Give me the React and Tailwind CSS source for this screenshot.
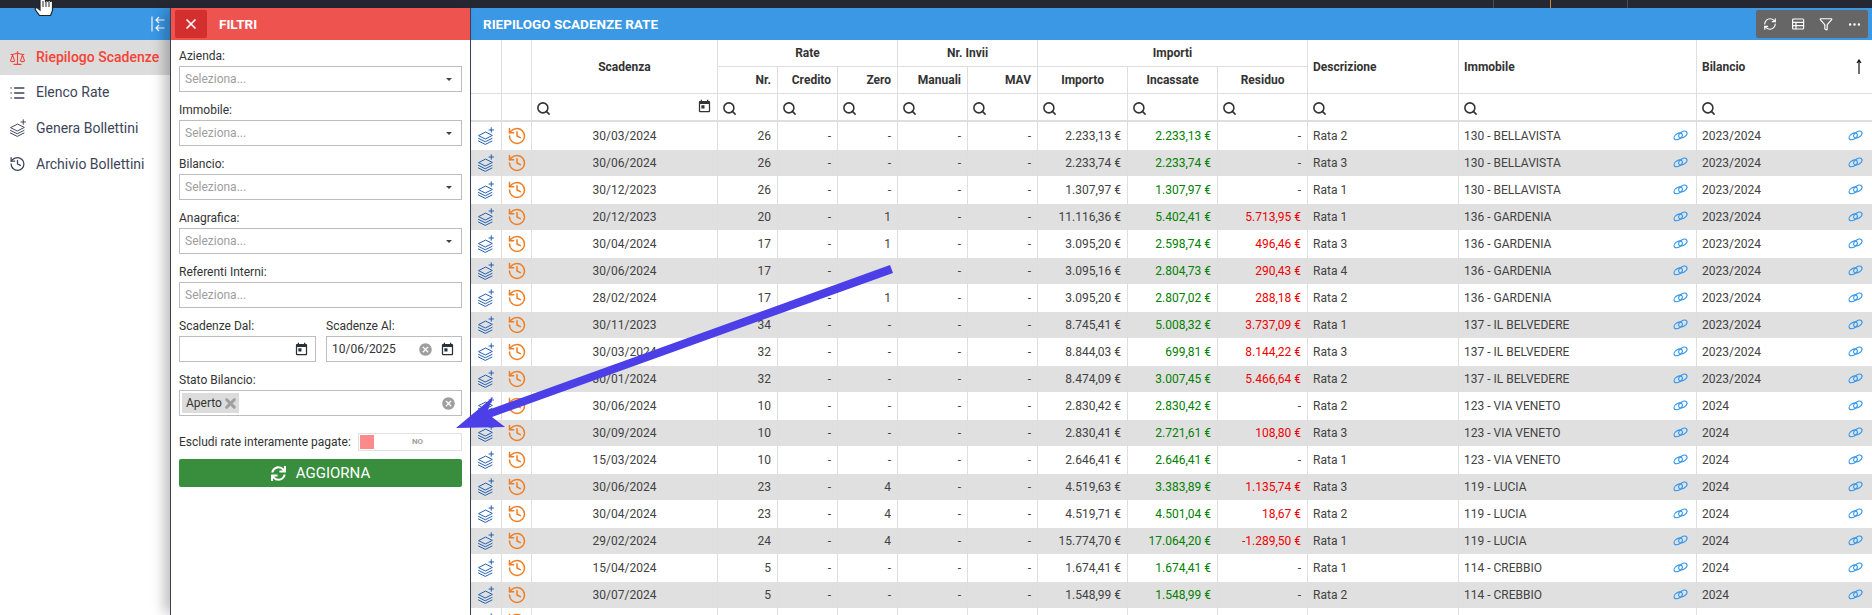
import React from "react";
import { Scale, List, History, Search, X, RefreshCw, Filter, MoreHorizontal } from "lucide-react";
import { MdToday, MdCancel } from "react-icons/md";
import { FaSync } from "react-icons/fa";

const B = "130 - BELLAVISTA", G = "136 - GARDENIA", V = "137 - IL BELVEDERE", T = "123 - VIA VENETO", L = "119 - LUCIA", C = "114 - CREBBIO";
const Y = "2023/2024";
const rows = [
  ["30/03/2024", "26", "-", "2.233,13 €", "2.233,13 €", "-", "Rata 2", B, Y],
  ["30/06/2024", "26", "-", "2.233,74 €", "2.233,74 €", "-", "Rata 3", B, Y],
  ["30/12/2023", "26", "-", "1.307,97 €", "1.307,97 €", "-", "Rata 1", B, Y],
  ["20/12/2023", "20", "1", "11.116,36 €", "5.402,41 €", "5.713,95 €", "Rata 1", G, Y],
  ["30/04/2024", "17", "1", "3.095,20 €", "2.598,74 €", "496,46 €", "Rata 3", G, Y],
  ["30/06/2024", "17", "-", "3.095,16 €", "2.804,73 €", "290,43 €", "Rata 4", G, Y],
  ["28/02/2024", "17", "1", "3.095,20 €", "2.807,02 €", "288,18 €", "Rata 2", G, Y],
  ["30/11/2023", "34", "-", "8.745,41 €", "5.008,32 €", "3.737,09 €", "Rata 1", V, Y],
  ["30/03/2024", "32", "-", "8.844,03 €", "699,81 €", "8.144,22 €", "Rata 3", V, Y],
  ["30/01/2024", "32", "-", "8.474,09 €", "3.007,45 €", "5.466,64 €", "Rata 2", V, Y],
  ["30/06/2024", "10", "-", "2.830,42 €", "2.830,42 €", "-", "Rata 2", T, "2024"],
  ["30/09/2024", "10", "-", "2.830,41 €", "2.721,61 €", "108,80 €", "Rata 3", T, "2024"],
  ["15/03/2024", "10", "-", "2.646,41 €", "2.646,41 €", "-", "Rata 1", T, "2024"],
  ["30/06/2024", "23", "4", "4.519,63 €", "3.383,89 €", "1.135,74 €", "Rata 3", L, "2024"],
  ["30/04/2024", "23", "4", "4.519,71 €", "4.501,04 €", "18,67 €", "Rata 2", L, "2024"],
  ["29/02/2024", "24", "4", "15.774,70 €", "17.064,20 €", "-1.289,50 €", "Rata 1", L, "2024"],
  ["15/04/2024", "5", "-", "1.674,41 €", "1.674,41 €", "-", "Rata 1", C, "2024"],
  ["30/07/2024", "5", "-", "1.548,99 €", "1.548,99 €", "-", "Rata 2", C, "2024"],
  ["", "", "", "", "", "", "", "", ""],
];
const widths = [31, 30, 186, 60, 60, 60, 70, 70, 90, 90, 90, 151, 238, 175];

const LayersPlus = ({ className, w = 2 }) => (
  <svg viewBox="0 0 24 24" fill="none" stroke="currentColor" strokeWidth={w} strokeLinejoin="round" strokeLinecap="round" className={className}>
    <path d="M11 7 2 11.500 11 16l9-4.500Z" />
    <path d="M2 15.200 11 19.700 20 15.200" />
    <path d="M2 18.700 11 23.200 20 18.700" />
    <path d="M19 1v6M16 4h6" />
  </svg>
);
const LinkIcon = () => (
  <svg viewBox="0 0 16 14" fill="none" stroke="#2f96ee" strokeWidth="1.200" className="w-[15px] h-[13px] shrink-0 -mt-[2px]">
    <ellipse cx="5.500" cy="8" rx="4.900" ry="3" transform="rotate(-32 5.500 8)" />
    <ellipse cx="10.500" cy="6" rx="4.900" ry="3" transform="rotate(-32 10.500 6)" />
  </svg>
);
const Caret = () => <span className="w-0 h-0 border-x-[3px] border-x-transparent border-t-[3px] border-t-[#37474f] mr-[9px]" />;

const SideItem = ({ icon, label, active, h }) => (
  <div className={`flex items-center ${h} pl-[9px] gap-[10px] text-[14px] ${active ? "bg-[#dcdcdc] text-[#f44336] font-medium" : "text-[#3d4459]"}`}>
    <span className="w-[17px] flex justify-center">{icon}</span>
    {label}
  </div>
);
const Label = ({ children }) => <div className="text-[12px] leading-[14px] text-[#333] mb-[3px]">{children}</div>;
const Box = ({ children, className = "" }) => (
  <div className={`h-[26px] border border-[#bdbdbd] flex items-center bg-white ${className}`}>{children}</div>
);
const SelectField = ({ label, noCaret }) => (
  <div>
    <Label>{label}</Label>
    <Box className="pl-[5px] justify-between">
      <span className="text-[12px] text-[#9e9e9e]">Seleziona...</span>
      {!noCaret && <Caret />}
    </Box>
  </div>
);

const thBase = "border-r border-b border-[#dedede] text-[12px] font-bold text-[#333] overflow-hidden whitespace-nowrap";
const th = `${thBase} px-[6px]`;
const thL = `${thBase} pl-[5px] pr-[6px] text-left`;
const tdBase = "border-r border-[#dedede] text-[12px] whitespace-nowrap overflow-hidden";
const td = `${tdBase} px-[6px]`;
const tdL = `${tdBase} pl-[5px] pr-[6px] text-[#424242]`;
const SearchCell = ({ cal }) => (
  <th className="border-r border-b-2 border-[#dedede] pl-1 pr-[5px] h-[28px]">
    <div className="flex justify-between items-center">
      <Search size={15} strokeWidth={2.500} className="text-[#333] mt-[2px]" />
      {cal && <MdToday size={15} className="text-[#333] -mt-[2px]" />}
    </div>
  </th>
);

export default function App() {
  return (
    <div className="relative w-[1872px] h-[615px] overflow-hidden bg-white flex flex-col font-['Roboto',sans-serif]">
      <div className="h-2 shrink-0 bg-[#252733] flex">
        <div className="ml-[1493px] w-px bg-[#4a4c58]" />
        <div className="ml-[56px] w-px bg-[#c98a3c]" />
        <div className="ml-[76px] w-px bg-[#4a4c58]" />
      </div>
      <div className="flex flex-1 min-h-0">
        {/* Sidebar */}
        <div className="w-[170px] shrink-0 flex flex-col">
          <div className="h-8 bg-[#3a98e4] flex justify-end items-center pr-[4px]">
            <svg viewBox="0 0 16 16" fill="none" stroke="white" strokeWidth="1.100" className="w-[16px] h-[16px]">
              <path d="M2 0.500v15M14.500 4H6M9 1 6 4l3 3M14.500 12H6M9 9l-3 3 3 3" />
            </svg>
          </div>
          <div className="flex-1 flex flex-col">
            <SideItem active h="h-[35px]" icon={<Scale size={20} strokeWidth={1.500} />} label="Riepilogo Scadenze" />
            <SideItem h="h-[35px]" icon={<List size={18} strokeWidth={2} />} label="Elenco Rate" />
            <SideItem h="h-9" icon={<LayersPlus className="w-[18px] h-[18px] shrink-0" w={1.300} />} label="Genera Bollettini" />
            <SideItem h="h-9" icon={<History size={18} strokeWidth={1.800} />} label="Archivio Bollettini" />
          </div>
        </div>

        {/* Filter panel */}
        <div className="w-[301px] shrink-0 flex flex-col border-x border-[#3a3f55] bg-white z-10 shadow-[-8px_0_12px_-2px_rgba(0,0,0,0.25)]">
          <div className="h-8 shrink-0 bg-[#ef5350] flex items-center gap-[12px] pl-[4px]">
            <div className="w-8 h-7 bg-[#d32f2f] rounded-[2px] flex items-center justify-center">
              <X size={16} strokeWidth={2.500} className="text-white" />
            </div>
            <span className="text-[13.500px] font-bold text-white">FILTRI</span>
          </div>
          <div className="pl-2 pr-2 pt-[9px] flex flex-col gap-[11px]">
            <SelectField label="Azienda:" />
            <SelectField label="Immobile:" />
            <SelectField label="Bilancio:" />
            <SelectField label="Anagrafica:" />
            <SelectField label="Referenti Interni:" noCaret />
            <div className="flex gap-[10px]">
              <div className="w-[137px]">
                <Label>Scadenze Dal:</Label>
                <Box className="justify-end pr-[6px]"><MdToday size={15} className="text-[#263238]" /></Box>
              </div>
              <div className="flex-1">
                <Label>Scadenze Al:</Label>
                <Box className="pl-[5px] pr-[6px] justify-between">
                  <span className="text-[12px] text-[#333]">10/06/2025</span>
                  <span className="flex items-center gap-[7px]">
                    <MdCancel size={15} className="text-[#9e9e9e]" />
                    <MdToday size={15} className="text-[#263238]" />
                  </span>
                </Box>
              </div>
            </div>
            <div>
              <Label>Stato Bilancio:</Label>
              <Box className="pl-[2px] pr-[5px] justify-between">
                <span className="h-5 pl-1 pr-[1px] bg-[#dcdcdc] flex items-center gap-[1px] text-[12px] text-[#333]">
                  Aperto <X size={15} strokeWidth={5} className="text-[#a0a0a0]" />
                </span>
                <MdCancel size={15} className="text-[#9e9e9e]" />
              </Box>
            </div>
            <div className="flex items-center justify-between mt-[6px]">
              <span className="text-[12px] text-[#333]">Escludi rate interamente pagate:</span>
              <div className="w-[104px] h-[18px] border border-[#e0e0e0] flex items-center pl-[1px]">
                <span className="w-[14px] h-[14px] bg-[#fb8a8a]" />
                <span className="flex-1 text-center text-[8px] font-bold text-[#9e9e9e]">NO</span>
              </div>
            </div>
            <div className="-mt-[3px] h-7 bg-[#388e3c] rounded-[2px] flex items-center justify-center gap-[10px] text-white text-[15px]">
              <FaSync size={15} />
              AGGIORNA
            </div>
          </div>
        </div>

        {/* Table panel */}
        <div className="flex-1 min-w-0 flex flex-col">
          <div className="h-8 shrink-0 bg-[#3a98e4] flex items-center justify-between pl-3 pr-1">
            <span className="text-[13.500px] font-bold text-white">RIEPILOGO SCADENZE RATE</span>
            <div className="w-[112px] h-7 bg-[#666666] rounded-[2px] flex items-center text-white">
              <span className="w-7 flex justify-center"><RefreshCw size={14} /></span>
              <span className="w-7 flex justify-center">
                <svg viewBox="0 0 14 14" fill="none" stroke="white" strokeWidth="1.200" className="w-[14px] h-[14px]">
                  <rect x="1.600" y="2" width="11" height="10" rx="1" />
                  <path d="M1.600 5.400h11M1.600 8.700h11M5 5.400V12" />
                </svg>
              </span>
              <span className="w-7 flex justify-center"><Filter size={14} /></span>
              <span className="w-7 flex justify-center"><MoreHorizontal size={15} /></span>
            </div>
          </div>
          <table className="table-fixed border-separate border-spacing-0 w-[1401px]">
            <colgroup>{widths.map((w, i) => <col key={i} style={{ width: w }} />)}</colgroup>
            <thead>
              <tr>
                <th rowSpan={2} className={th}></th>
                <th rowSpan={2} className={th}></th>
                <th rowSpan={2} className={`${th} text-center`}>Scadenza</th>
                <th colSpan={3} className={`${th} text-center h-[27px]`}>Rate</th>
                <th colSpan={2} className={`${th} text-center`}>Nr. Invii</th>
                <th colSpan={3} className={`${th} text-center`}>Importi</th>
                <th rowSpan={2} className={thL}>Descrizione</th>
                <th rowSpan={2} className={thL}>Immobile</th>
                <th rowSpan={2} className="border-b border-[#dedede] text-[12px] font-bold text-[#333] pl-[5px] pr-[9px] text-left">
                  <div className="flex items-center justify-between">
                    Bilancio
                    <svg viewBox="0 0 8 16" fill="none" stroke="#111" strokeWidth="1.200" className="w-2 h-4"><path d="M4 15V1M2 4l2-3 2 3" /></svg>
                  </div>
                </th>
              </tr>
              <tr>
                {["Nr.", "Credito", "Zero", "Manuali", "MAV"].map((h) => (
                  <th key={h} className={`${th} text-right h-[27px]`}>{h}</th>
                ))}
                {["Importo", "Incassate", "Residuo"].map((h) => (
                  <th key={h} className={`${th} text-center`}>{h}</th>
                ))}
              </tr>
              <tr>
                <th className="border-r border-b-2 border-[#dedede]" />
                <th className="border-r border-b-2 border-[#dedede]" />
                <SearchCell cal />
                {[0, 1, 2, 3, 4, 5, 6, 7, 8, 9].map((i) => <SearchCell key={i} />)}
                <th className="border-b-2 border-[#dedede] pl-1">
                  <Search size={15} strokeWidth={2.500} className="text-[#333] mt-[2px]" />
                </th>
              </tr>
            </thead>
            <tbody>
              {rows.map((r, i) => (
                <tr key={i} className={i % 2 ? "bg-[#e0e0e0] h-[26px]" : "bg-white h-[28px]"}>
                  <td className="border-r border-[#dedede] text-center leading-none">
                    <LayersPlus className="w-[18px] h-[18px] inline-block text-[#1e5bb0]" w={1.300} />
                  </td>
                  <td className="border-r border-[#dedede] text-center leading-none">
                    <History size={20} strokeWidth={1.800} className="inline-block text-[#ef7d22]" />
                  </td>
                  <td className={`${td} text-center text-[#424242]`}>{r[0]}</td>
                  <td className={`${td} text-right text-[#424242]`}>{r[1]}</td>
                  <td className={`${td} text-right text-[#424242]`}>{r[0] && "-"}</td>
                  <td className={`${td} text-right text-[#424242]`}>{r[2]}</td>
                  <td className={`${td} text-right text-[#424242]`}>{r[0] && "-"}</td>
                  <td className={`${td} text-right text-[#424242]`}>{r[0] && "-"}</td>
                  <td className={`${td} text-right text-[#424242]`}>{r[3]}</td>
                  <td className={`${td} text-right text-[#008000]`}>{r[4]}</td>
                  <td className={`${td} text-right ${r[5] === "-" ? "text-[#424242]" : "text-[#f00000]"}`}>{r[5]}</td>
                  <td className={tdL}>{r[6]}</td>
                  <td className={tdL}>
                    <div className="flex items-center justify-between pr-[2px]">{r[7]}{r[0] && <LinkIcon />}</div>
                  </td>
                  <td className="text-[12px] text-[#424242] pl-[5px] pr-[9px]">
                    <div className="flex items-center justify-between">{r[8]}{r[0] && <LinkIcon />}</div>
                  </td>
                </tr>
              ))}
            </tbody>
          </table>
        </div>
      </div>

      {/* Annotation arrow and mouse pointer laid over the screenshot */}
      <svg className="absolute left-0 top-0 w-[1872px] h-[615px] pointer-events-none z-20" viewBox="0 0 1872 615">
        <polygon points="890,265 893,273 492,417 505,427 456,428 493,397 488,410" fill="#4c3fe8" />
        <path d="M40 -4V10l-2.500-2c-1.500-1-3 .5-2 2l4 5.500h11l2-5V2c0-1.500-2-1.500-2 0-0-2-2.500-2-2.500 0 0-2-2.500-2-2.500 0V-4Z" fill="white" stroke="#222" strokeWidth="1.200" />
        <path d="M43 1v6M46 1v6M49 2v5" stroke="#222" strokeWidth="1" />
      </svg>
    </div>
  );
}
